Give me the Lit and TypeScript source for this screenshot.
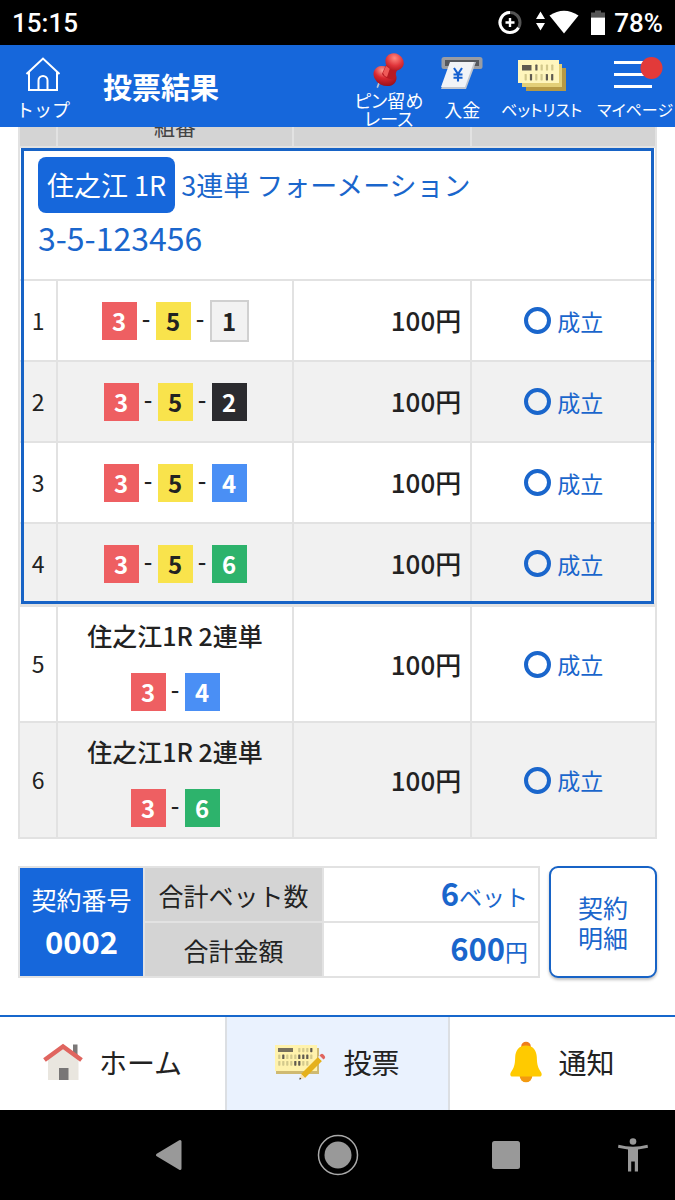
import { LitElement, html, css, svg } from "lit";
import { customElement } from "lit/decorators.js";
import { classMap } from "lit/directives/class-map.js";

interface Bet {
  no: number;
  title?: string;
  boats: number[];
  amount: number;
}

const GROUP_BETS: Bet[] = [
  { no: 1, boats: [3, 5, 1], amount: 100 },
  { no: 2, boats: [3, 5, 2], amount: 100 },
  { no: 3, boats: [3, 5, 4], amount: 100 },
  { no: 4, boats: [3, 5, 6], amount: 100 },
];

const SINGLE_BETS: Bet[] = [
  { no: 5, title: "住之江1R 2連単", boats: [3, 4], amount: 100 },
  { no: 6, title: "住之江1R 2連単", boats: [3, 6], amount: 100 },
];

const bars = (marks: string, x0: number, step: number, y: number, h: number) =>
  [...marks].map((m, i) =>
    m === " "
      ? null
      : svg`<rect x=${x0 + i * step} y=${y} width="2.2" height=${h} rx=".6" fill=${m === "#" ? "#5f5a50" : "#d3c98c"} />`
  );

const homeOutline = html`<svg width="36" height="34" viewBox="0 0 36 34" fill="none" stroke="#fff" stroke-width="2" aria-hidden="true">
  <path d="M1.500 17.500 18 2l16.500 15.500M4 15.500V33.500H32V15.500M13.500 33.500V24a4.500 4.500 0 0 1 9 0V33.500" transform="translate(0 -.5)" />
</svg>`;

const pinIcon = html`<svg width="34" height="36" viewBox="0 0 34 36" aria-hidden="true">
  <defs>
    <radialGradient id="pinTop" cx=".4" cy=".3" r=".8">
      <stop offset="0" stop-color="#ff8a80" /><stop offset=".55" stop-color="#e0343a" /><stop offset="1" stop-color="#a8141c" />
    </radialGradient>
    <radialGradient id="pinBase" cx=".3" cy=".3" r=".85">
      <stop offset="0" stop-color="#ff9d92" /><stop offset=".45" stop-color="#d92830" /><stop offset="1" stop-color="#8e0d16" />
    </radialGradient>
  </defs>
  <path d="M7 31 5.500 35" stroke="#b9c2d0" stroke-width="1.800" stroke-linecap="round" />
  <ellipse cx="13" cy="24" rx="12" ry="9.500" transform="rotate(28 13 24)" fill="url(#pinBase)" />
  <path d="M14 13 10 22q4 6 12 5l3-9z" fill="#b81a22" />
  <path d="M14 14 11 21q1 3 4 4l3-9z" fill="#ef5a58" />
  <ellipse cx="22.500" cy="10" rx="9.500" ry="8.500" transform="rotate(30 22.5 10)" fill="url(#pinTop)" />
</svg>`;

const depositIcon = html`<svg width="42" height="34" viewBox="0 0 42 34" aria-hidden="true">
  <rect x=".5" y="0" width="41" height="12" rx="2.500" fill="#9a9da3" />
  <rect x="4" y="3" width="34" height="6" fill="#55585e" />
  <path d="M10 5H35L25 32H0z" fill="#c3c7cf" />
  <path d="M9 5H33L24 30H0z" fill="#f1f3f7" />
  <path d="m13 11 4 6 4-6M17 17V24.500M12.500 17.500h9M12.500 20.800h9" fill="none" stroke="#1560d0" stroke-width="2.100" />
</svg>`;

const betListIcon = html`<svg width="48" height="34" viewBox="0 0 48 34" aria-hidden="true">
  <rect x="8" y="11" width="40" height="23" fill="#b79a45" />
  <rect x="4" y="7" width="40" height="23" fill="#e3cf78" />
  <rect x="0" y="3" width="41" height="23" fill="#fff6bd" />
  <rect x="4" y="8" width="9.500" height="5.500" fill="#5f5a50" />
  ${bars("#---", 17.3, 5.3, 7.6, 6)} ${bars("-#--##", 6.6, 5.3, 17, 6.4)}
</svg>`;

const menuIcon = html`<svg width="50" height="34" viewBox="0 0 50 34" aria-hidden="true">
  <path d="M4 5.500H42M4 17.500H42M4 29.500H42" stroke="#fff" stroke-width="3" />
  <circle cx="41.500" cy="11" r="11" fill="#e23a3a" />
</svg>`;

const houseIcon = html`<svg width="40" height="38" viewBox="0 0 40 38" aria-hidden="true">
  <rect x="30" y="1.500" width="4.500" height="12" fill="#7b7878" />
  <path d="M5 15 20 4l15.500 11V37H5z" fill="#e9e6df" />
  <path d="m1.500 17 18.500-13.500L38.500 17" fill="none" stroke="#e0655f" stroke-width="4.500" />
  <rect x="16" y="25" width="9.500" height="12" fill="#787676" />
</svg>`;

const voteIcon = html`<svg width="52" height="38" viewBox="0 0 52 38" aria-hidden="true">
  <rect x="1" y="5" width="43" height="26" fill="#cfba72" />
  <rect x="0" y="2" width="42" height="26" fill="#fff2ac" />
  <rect x="3" y="5" width="15" height="4" fill="#77705c" />
  ${bars("---#", 23.2, 4, 5, 4.2)} ${bars("-#---###-", 3.2, 4, 11.500, 4.5)} ${bars("----##--", 3.2, 4, 18, 4.7)}
  <path d="m26 31 17-17 4 4-17 17z" fill="#e5b11c" />
  <path d="m26 31 4 4-5.500 1.500z" fill="#fae3b5" />
  <path d="m24.300 36.600.6-2 1.500 1.500z" fill="#222" />
  <path d="m43 14 1.500-1.500 4 4L47 18z" fill="#eceff1" />
  <path d="m44.500 12.500 1.200-1.200q1.300-1 2.500 0l1.500 1.600q1 1.200 0 2.400l-1.200 1.200z" fill="#e0655f" />
</svg>`;

const bellIcon = html`<svg width="32" height="42" viewBox="0 0 32 42" aria-hidden="true">
  <circle cx="16" cy="5.500" r="4.800" fill="#ef7d1a" />
  <circle cx="16" cy="35" r="6.300" fill="#f29a10" />
  <path d="M16 4.500C8.500 4.500 5.500 10 5.200 16 5 24 4 27 .8 31.500-.2 33.500.3 35.500 2.500 35.500H29.500C31.700 35.500 32.200 33.500 31.200 31.500 28 27 27 24 26.800 16 26.500 10 23.500 4.500 16 4.500z" fill="#ffca00" />
</svg>`;

const statusIcons = html`<svg width="98" height="28" viewBox="0 0 98 28" aria-hidden="true">
  <circle cx="13" cy="13.500" r="10" fill="none" stroke="#555" stroke-width="3" />
  <path d="M13 3.500A10 10 0 1 0 21.500 18.800" fill="none" stroke="#fff" stroke-width="3" />
  <path d="M13 9v9M8.500 13.500h9" stroke="#fff" stroke-width="2.400" />
  <path d="m43.500 2.500 4.500 7.500h-9zM43.500 21.500l4.500-7.500h-9z" fill="#fff" />
  <path d="M52.500 6.500Q67 -3 81.500 6.500L67 24.500z" fill="#fff" />
</svg><svg width="14" height="28" viewBox="0 0 14 28" aria-hidden="true">
  <path d="M4 1.500h6v2h4v5H0v-5h4z" fill="#555" />
  <rect y="8.500" width="14" height="17.500" fill="#fff" />
</svg>`;

@customElement("status-bar")
export class StatusBar extends LitElement {
  static styles = css`
    :host {
      display: flex;
      align-items: center;
      justify-content: space-between;
      height: 45px;
      padding: 0 12px;
      background: #000;
      color: #fff;
      font: 500 26px/32px Roboto, sans-serif;
    }
    .right {
      display: flex;
      align-items: center;
      gap: 9px;
    }
    .icons {
      display: flex;
      align-items: center;
    }
    svg {
      display: block;
    }
    .icons svg:last-child {
      margin-left: -4px;
    }
  `;
  render() {
    return html`<span>15:15</span>
      <span class="right"><span class="icons">${statusIcons}</span><span>78%</span></span>`;
  }
}

@customElement("app-header")
export class AppHeader extends LitElement {
  static styles = css`
    :host {
      display: flex;
      align-items: flex-start;
      height: 82px;
      padding: 0 2px 0 16px;
      box-sizing: border-box;
      background: #1667db;
      color: #fff;
    }
    .item {
      display: flex;
      flex-direction: column;
      align-items: center;
      gap: 9px;
      min-width: 48px;
      padding: 12px 0 0;
      border: 0;
      background: none;
      color: inherit;
      font: 400 18px/18px "Noto Sans CJK JP", sans-serif;
      text-decoration: none;
      text-align: center;
      white-space: nowrap;
    }
    .item.tall {
      padding-top: 7px;
      gap: 3px;
    }
    .item.kana {
      font-size: 16px;
    }
    nav .item {
      font-feature-settings: "palt";
    }
    svg {
      display: block;
      overflow: visible;
    }
    h1 {
      flex: 1;
      margin: 0;
      padding-left: 33px;
      font-size: 29px;
      line-height: 82px;
      font-weight: 700;
      white-space: nowrap;
    }
    nav {
      display: flex;
      gap: 15px;
    }
  `;
  render() {
    return html`<a class="item" href="#top">${homeOutline}<span>トップ</span></a>
      <h1>投票結果</h1>
      <nav>
        <a class="item tall" href="#pinned">${pinIcon}<span>ピン留め<br />レース</span></a>
        <a class="item" href="#deposit">${depositIcon}<span>入金</span></a>
        <a class="item kana" href="#betlist">${betListIcon}<span>ベットリスト</span></a>
        <button class="item kana" type="button">${menuIcon}<span>マイページ</span></button>
      </nav>`;
  }
}

@customElement("bet-table")
export class BetTable extends LitElement {
  static styles = css`
    :host {
      display: block;
    }
    table {
      width: 100%;
      table-layout: fixed;
      border-collapse: collapse;
    }
    .c-no {
      width: 6%;
    }
    .c-combo {
      width: 37%;
    }
    .c-amount {
      width: 28%;
    }
    .c-result {
      width: 29%;
    }
    th,
    td {
      padding: 0;
      border: 2px solid #e2e2e2;
      text-align: center;
    }
    thead th {
      height: 40px;
      background: #d4d4d4;
      color: #444;
      font-size: 21px;
      line-height: 24px;
      font-weight: 400;
    }
    .group {
      position: relative;
    }
    .group::after {
      content: "";
      position: absolute;
      inset: 1px 2px 2px;
      border: 3px solid #1763c6;
      pointer-events: none;
    }
    .group-head {
      height: 122px;
      padding: 9px 18px 0;
      text-align: left;
      vertical-align: top;
      font-weight: 400;
      color: #1a66cc;
    }
    .line {
      display: flex;
      align-items: center;
      gap: 6px;
      font-size: 27px;
      line-height: 56px;
    }
    .race {
      padding: 0 9px;
      border-radius: 8px;
      background: #1667db;
      color: #fff;
    }
    .pattern {
      font-size: 32px;
      line-height: 48px;
    }
    .row td {
      height: 79px;
    }
    .row.wide td {
      height: 112px;
    }
    .row.alt td {
      background: #f1f1f1;
    }
    .row .no {
      padding-bottom: 2px;
      font-size: 23px;
    }
    .row:not(.wide) .no,
    .row:not(.wide) .amount {
      height: 77px;
    }
    .row .amount {
      padding: 0 9px 2px 0;
      text-align: right;
      font-size: 26px;
      font-weight: 500;
    }
    .title {
      padding-top: 2px;
      margin-bottom: 22px;
      font-size: 25px;
      line-height: 32px;
      font-weight: 500;
    }
    .combo {
      display: flex;
      align-items: center;
      justify-content: center;
      gap: 5px;
      font-size: 24px;
      line-height: 38px;
    }
    .dash {
      width: 9px;
      line-height: 32px;
      padding-bottom: 6px;
      font-weight: 500;
    }
    .boat {
      width: 35px;
      font-weight: 700;
      color: #fff;
    }
    .b1 {
      border: 2px solid #d0d0d0;
      background: #f2f2f2;
      color: #222;
    }
    .b2 {
      background: #2b2b2f;
    }
    .b3 {
      background: #ee5f62;
    }
    .b4 {
      background: #4a8ff5;
    }
    .b5 {
      background: #f9e34c;
      color: #222;
    }
    .b6 {
      background: #2db36c;
    }
    .result {
      display: flex;
      align-items: center;
      justify-content: center;
      gap: 6px;
      font-size: 23px;
      line-height: 32px;
      color: #1a66cc;
    }
    .ring {
      width: 19px;
      height: 19px;
      border: 4px solid #1a66cc;
      border-radius: 50%;
    }
  `;

  private row(bet: Bet) {
    return html`<tr class=${classMap({ row: true, wide: !!bet.title, alt: bet.no % 2 === 0 })}>
      <td class="no">${bet.no}</td>
      <td>
        ${bet.title ? html`<div class="title">${bet.title}</div>` : null}
        <div class="combo">
          ${bet.boats.map((b, i) => html`${i ? html`<span class="dash">-</span>` : null}<span class="boat b${b}">${b}</span>`)}
        </div>
      </td>
      <td class="amount">${bet.amount}円</td>
      <td><div class="result"><span class="ring"></span>成立</div></td>
    </tr>`;
  }

  render() {
    return html`<table>
      <colgroup>
        <col class="c-no" />
        <col class="c-combo" />
        <col class="c-amount" />
        <col class="c-result" />
      </colgroup>
      <thead>
        <tr>
          <th></th>
          <th scope="col">組番</th>
          <th></th>
          <th></th>
        </tr>
      </thead>
      <tbody class="group">
        <tr>
          <th class="group-head" colspan="4">
            <div class="line"><span class="race">住之江 1R</span><span>3連単 フォーメーション</span></div>
            <div class="pattern">3-5-123456</div>
          </th>
        </tr>
        ${GROUP_BETS.map((b) => this.row(b))}
      </tbody>
      <tbody>
        ${SINGLE_BETS.map((b) => this.row(b))}
      </tbody>
    </table>`;
  }
}

@customElement("bet-summary")
export class BetSummary extends LitElement {
  static styles = css`
    :host {
      display: flex;
      align-items: stretch;
      gap: 9px;
      font-size: 25px;
      line-height: 30px;
    }
    table {
      flex: 1;
      table-layout: fixed;
      border-collapse: collapse;
    }
    th,
    td {
      height: 53px;
      padding: 0;
      border: 2px solid #e2e2e2;
      font-weight: 400;
      text-align: center;
    }
    .contract {
      width: 123px;
      padding-bottom: 4px;
      background: #1667db;
      color: #fff;
    }
    .contract strong {
      display: block;
      margin-top: 12px;
      font-size: 31px;
      font-weight: 700;
    }
    .label {
      width: 177px;
      background: #d4d4d4;
    }
    .value {
      padding-right: 10px;
      text-align: right;
      color: #1a66cc;
      font-size: 23px;
    }
    .value strong {
      font-size: 31px;
      font-weight: 700;
    }
    button {
      width: 108px;
      padding: 0;
      border: 2px solid #1763c6;
      border-radius: 9px;
      background: #fff;
      box-shadow: 0 2px 3px rgba(0, 0, 0, 0.25);
      color: #1a66cc;
      font: inherit;
    }
  `;
  render() {
    return html`<table>
        <tr>
          <th class="contract" rowspan="2">契約番号<strong>0002</strong></th>
          <th class="label" scope="row">合計ベット数</th>
          <td class="value"><strong>6</strong>ベット</td>
        </tr>
        <tr>
          <th class="label" scope="row">合計金額</th>
          <td class="value"><strong>600</strong>円</td>
        </tr>
      </table>
      <button type="button">契約<br />明細</button>`;
  }
}

@customElement("tab-bar")
export class TabBar extends LitElement {
  static styles = css`
    :host {
      display: grid;
      grid-template-columns: 1fr 1fr 1fr;
      height: 95px;
      box-sizing: border-box;
      border-top: 2px solid #1667cc;
      background: #fff;
    }
    a {
      display: flex;
      align-items: center;
      justify-content: center;
      gap: 16px;
      padding-bottom: 4px;
      color: #222;
      font-size: 28px;
      line-height: 40px;
      text-decoration: none;
    }
    a.active {
      background: #eaf2fe;
      border: solid #dcdfe3;
      border-width: 0 2px;
    }
    svg {
      display: block;
    }
  `;
  render() {
    return html`<a href="#home">${houseIcon}ホーム</a>
      <a class="active" href="#vote" aria-current="page">${voteIcon}投票</a>
      <a href="#notice">${bellIcon}通知</a>`;
  }
}

@customElement("system-nav")
export class SystemNav extends LitElement {
  static styles = css`
    :host {
      display: grid;
      grid-template-columns: 1fr 2fr 2fr 2fr 1fr;
      height: 90px;
      background: #000;
    }
    button {
      display: flex;
      align-items: center;
      justify-content: center;
      padding: 0;
      border: 0;
      background: none;
    }
    .back {
      grid-column: 2;
    }
  `;
  render() {
    return html`<button class="back" aria-label="戻る">
        <svg width="28" height="32" viewBox="0 0 28 32"><path d="M25 2.500V29.500L2.500 16z" fill="#999" stroke="#999" stroke-width="3" stroke-linejoin="round" /></svg>
      </button>
      <button aria-label="ホーム">
        <svg width="42" height="42" viewBox="0 0 42 42"><circle cx="21" cy="21" r="19.500" fill="none" stroke="#aaa" stroke-width="1.500" /><circle cx="21" cy="21" r="13.500" fill="#999" /></svg>
      </button>
      <button aria-label="履歴">
        <svg width="28" height="28" viewBox="0 0 28 28"><rect width="28" height="28" rx="2.500" fill="#999" /></svg>
      </button>
      <button aria-label="ユーザー補助">
        <svg width="30" height="34" viewBox="0 0 30 34" fill="#999"><circle cx="15" cy="3.500" r="3.300" /><path d="M.5 6.800Q15 10.500 29.500 6.800L30 9.800 20 11.500V33.500H16.800V23.500H13.200V33.500H10V11.500L0 9.800z" /></svg>
      </button>`;
  }
}

@customElement("app-root")
export class AppRoot extends LitElement {
  static styles = css`
    :host {
      display: flex;
      flex-direction: column;
      height: 100vh;
      background: #fff;
      color: #222;
      font-family: "Noto Sans CJK JP", sans-serif;
    }
    main {
      flex: 1;
      min-height: 0;
      padding: 0 18px;
      overflow: hidden;
    }
    /* The list is scrolled a little, so its head row slides under the header. */
    bet-table {
      margin-top: -23px;
    }
    bet-summary {
      margin-top: 27px;
    }
  `;
  render() {
    return html`<status-bar></status-bar>
      <app-header></app-header>
      <main>
        <bet-table></bet-table>
        <bet-summary></bet-summary>
      </main>
      <tab-bar></tab-bar>
      <system-nav></system-nav>`;
  }
}
